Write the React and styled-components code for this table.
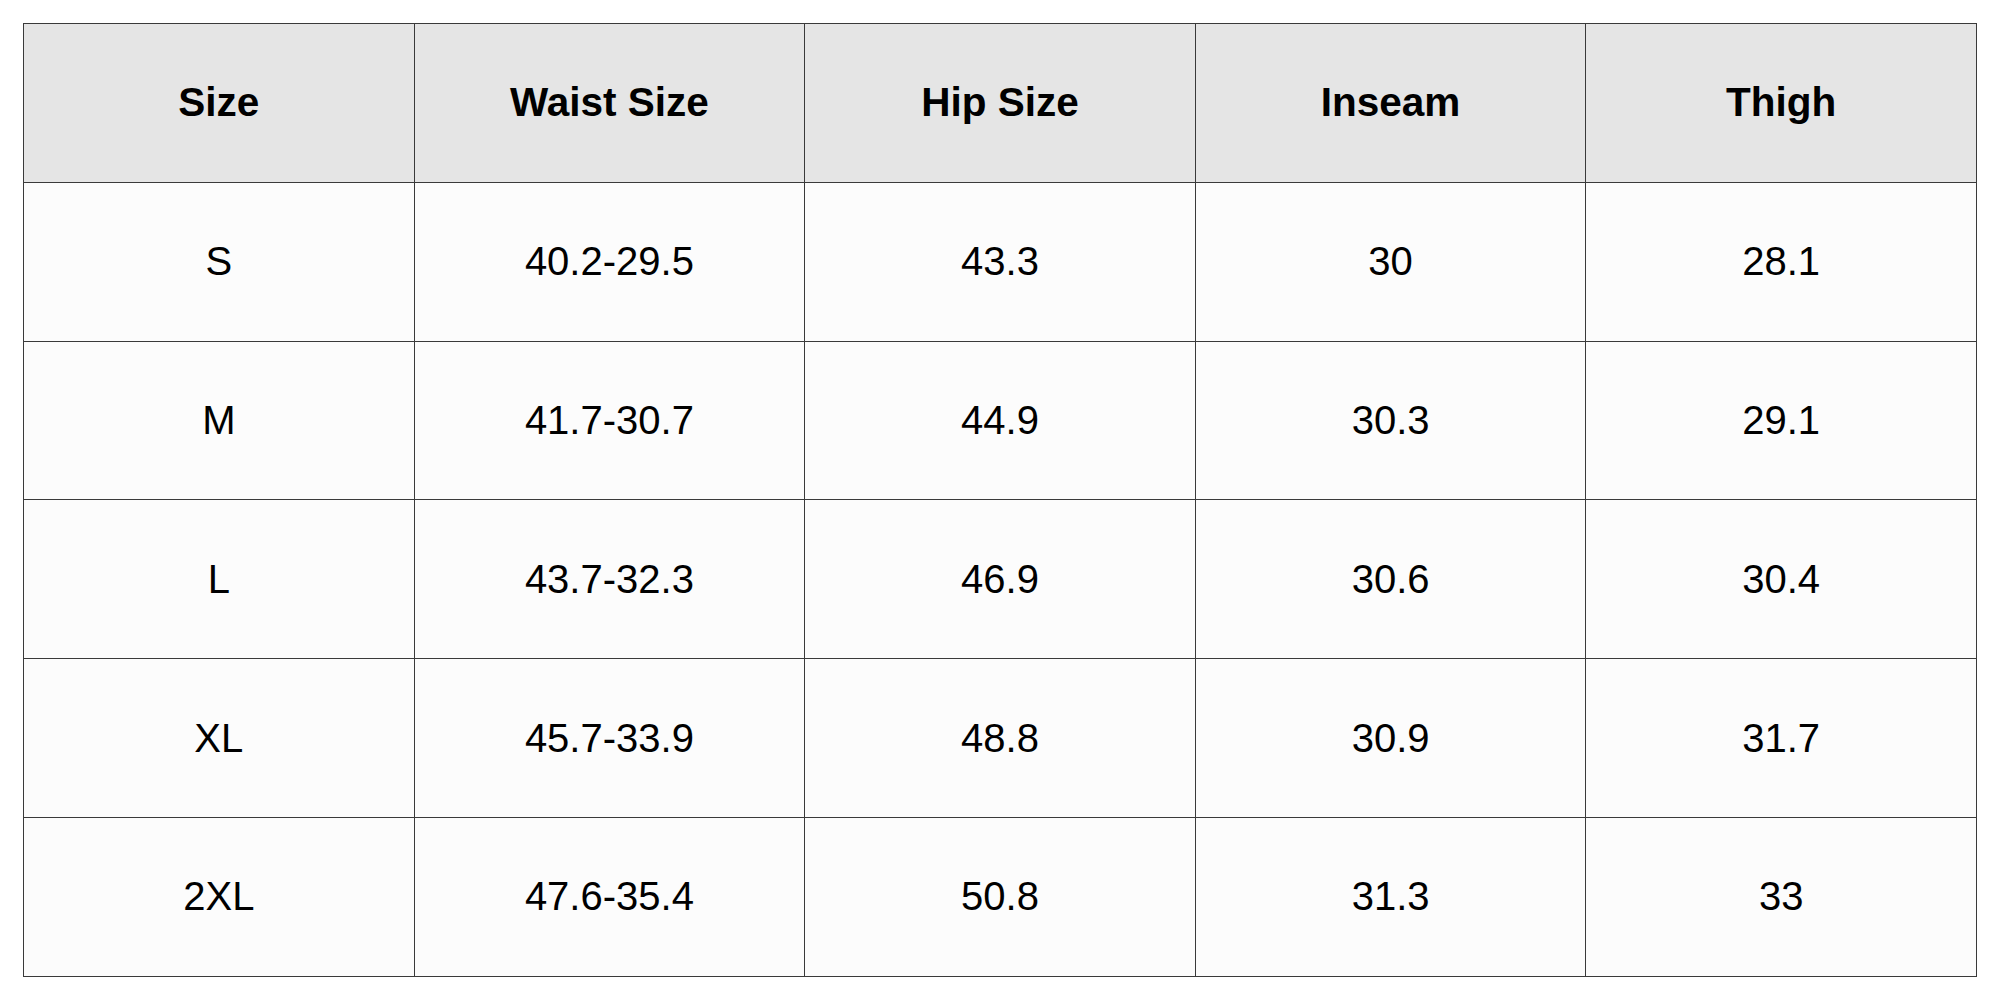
import React from 'react';
import styled, { createGlobalStyle } from 'styled-components';

const GlobalStyle = createGlobalStyle`
  html, body {
    margin: 0;
    padding: 0;
    background: #ffffff;
  }
  body {
    font-family: "Liberation Sans", Arial, sans-serif;
    color: #000;
  }
`;

const columns = ['Size', 'Waist Size', 'Hip Size', 'Inseam', 'Thigh'];

const rows = [
  ['S', '40.2-29.5', '43.3', '30', '28.1'],
  ['M', '41.7-30.7', '44.9', '30.3', '29.1'],
  ['L', '43.7-32.3', '46.9', '30.6', '30.4'],
  ['XL', '45.7-33.9', '48.8', '30.9', '31.7'],
  ['2XL', '47.6-35.4', '50.8', '31.3', '33'],
];

function App() {
  return (
    <Page>
      <GlobalStyle />
      <ChartTable>
        <thead>
          <Row>
            {columns.map((col) => (
              <HeadCell key={col}>{col}</HeadCell>
            ))}
          </Row>
        </thead>
        <tbody>
          {rows.map((row) => (
            <Row key={row[0]}>
              {row.map((value, i) => (
                <Cell key={i}>{value}</Cell>
              ))}
            </Row>
          ))}
        </tbody>
      </ChartTable>
    </Page>
  );
}

const Page = styled.div`
  padding: 23px;
`;

const ChartTable = styled.table`
  width: 1954px;
  border-collapse: collapse;
  table-layout: fixed;
  font-family: "Liberation Sans", Arial, sans-serif;
  color: #000;
`;

const Row = styled.tr`
  height: 158.8px;
`;

const HeadCell = styled.th`
  border: 1px solid #3a3a3a;
  background: #e5e5e5;
  font-family: "Liberation Sans", Arial, sans-serif;
  font-size: 40.5px;
  font-weight: bold;
  text-align: center;
  vertical-align: middle;
  padding: 0;
`;

const Cell = styled.td`
  border: 1px solid #3a3a3a;
  background: #fcfcfc;
  font-family: "Liberation Sans", Arial, sans-serif;
  font-size: 40px;
  text-align: center;
  vertical-align: middle;
  padding: 0;
`;

export default App;
